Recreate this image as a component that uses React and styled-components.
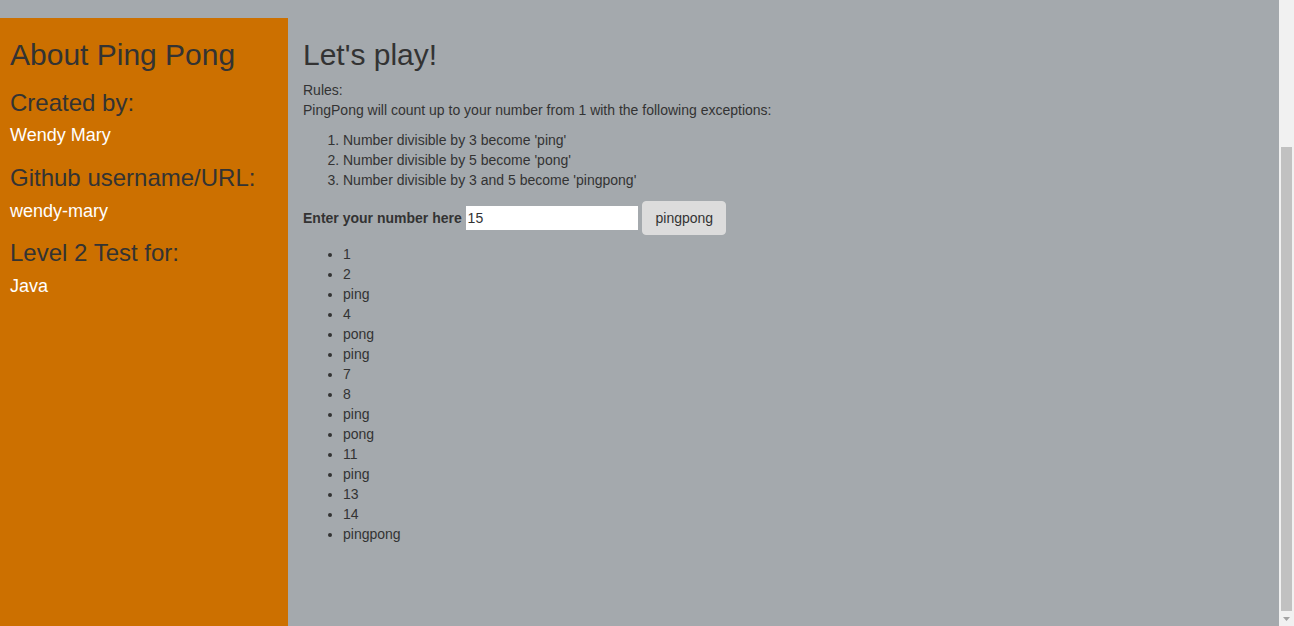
import React from "react";
import styled, { createGlobalStyle } from "styled-components";

const GlobalStyle = createGlobalStyle`
  html, body {
    margin: 0;
    padding: 0;
    height: 100%;
    overflow: hidden;
  }
  body {
    background: #a4a9ad;
    font-family: "Liberation Sans", Arial, Helvetica, sans-serif;
    font-size: 14px;
    line-height: 1.42857;
    color: #333;
  }
  #root { height: 100%; }
  * { box-sizing: border-box; }
`;

const Frame = styled.div`
  display: flex;
  height: 100vh;
`;

const Viewport = styled.div`
  flex: 1;
  min-width: 0;
  display: flex;
  flex-direction: column;
  padding-top: 18px;
  overflow: hidden;
`;

const Row = styled.div`
  flex: 1;
  display: flex;
`;

const Sidebar = styled.aside`
  width: 288px;
  flex: 0 0 288px;
  background: #cc7000;
  padding: 0 10px;
`;

const Main = styled.main`
  flex: 1;
  padding: 0 15px;
`;

const Title = styled.h2`
  font-size: 30px;
  font-weight: 500;
  line-height: 1.1;
  margin: 20px 0 10px;
  color: #333;
`;

const SubTitle = styled.h3`
  font-size: 24px;
  font-weight: 500;
  line-height: 1.1;
  margin: 19px 0 10px;
  color: #333;
`;

const Value = styled.h4`
  font-size: 18px;
  font-weight: 500;
  line-height: 1.1;
  margin: 10px 0 10px;
  color: #fff;
`;

const Text = styled.p`
  margin: 0 0 10px;
`;

const RuleList = styled.ol`
  margin: 0 0 10px;
  padding-left: 40px;
`;

const Form = styled.form`
  margin: 0 0 10px;
`;

const Label = styled.label`
  display: inline-block;
  font-weight: 700;
  margin-bottom: 5px;
`;

const NumberInput = styled.input`
  width: 172px;
  height: 24px;
  border: none;
  padding: 0 2px;
  margin: 0;
  background: #fff;
  color: #333;
  font-family: inherit;
  font-size: 14px;
  vertical-align: baseline;
  outline: none;
`;

const Button = styled.button`
  display: inline-block;
  padding: 6px 12px;
  margin: 0 0 0 1px;
  font-family: inherit;
  font-size: 14px;
  line-height: 20px;
  color: #333;
  background: #dcdcdc;
  border: 1px solid #dcdcdc;
  border-radius: 4px;
  cursor: pointer;
`;

const ResultList = styled.ul`
  margin: 0 0 10px;
  padding-left: 40px;
`;

/* Browser scrollbar drawn at the right edge */
const ScrollBar = styled.div`
  flex: 0 0 15px;
  width: 15px;
  display: flex;
  flex-direction: column;
  background: #f1f1f1;
`;

const ScrollButton = styled.div`
  flex: 0 0 15px;
  display: flex;
  align-items: center;
  justify-content: center;
  color: #a3a3a3;
`;

const ScrollTrack = styled.div`
  flex: 1;
  display: flex;
  flex-direction: column;
  padding: ${(p) => p.$offset}px 2px 0;
`;

const ScrollThumb = styled.div`
  height: ${(p) => p.$size}px;
  background: #c1c1c1;
`;

const pingPong = (n) => {
  const out = [];
  for (let i = 1; i <= n; i++) {
    if (i % 15 === 0) out.push("pingpong");
    else if (i % 3 === 0) out.push("ping");
    else if (i % 5 === 0) out.push("pong");
    else out.push(String(i));
  }
  return out;
};

export default function App() {
  const results = pingPong(15);

  return (
    <>
      <GlobalStyle />
      <Frame>
        <Viewport>
          <Row>
            <Sidebar>
              <Title>About Ping Pong</Title>
              <SubTitle>Created by:</SubTitle>
              <Value>Wendy Mary</Value>
              <SubTitle>Github username/URL:</SubTitle>
              <Value>wendy-mary</Value>
              <SubTitle>Level 2 Test for:</SubTitle>
              <Value>Java</Value>
            </Sidebar>
            <Main>
              <Title>Let's play!</Title>
              <Text>
                Rules:
                <br />
                PingPong will count up to your number from 1 with the following exceptions:
              </Text>
              <RuleList>
                <li>Number divisible by 3 become 'ping'</li>
                <li>Number divisible by 5 become 'pong'</li>
                <li>Number divisible by 3 and 5 become 'pingpong'</li>
              </RuleList>
              <Form onSubmit={(e) => e.preventDefault()}>
                <Label htmlFor="number">Enter your number here</Label>{" "}
                <NumberInput id="number" type="text" defaultValue="15" />{" "}
                <Button type="submit">pingpong</Button>
              </Form>
              <ResultList>
                {results.map((r, i) => (
                  <li key={i}>{r}</li>
                ))}
              </ResultList>
            </Main>
          </Row>
        </Viewport>
        <ScrollBar>
          <ScrollButton />
          <ScrollTrack $offset={132}>
            <ScrollThumb $size={464} />
          </ScrollTrack>
          <ScrollButton>
            <svg width="7" height="4" viewBox="0 0 7 4">
              <path d="M0 0H7L3.5 4Z" fill="currentColor" />
            </svg>
          </ScrollButton>
        </ScrollBar>
      </Frame>
    </>
  );
}
